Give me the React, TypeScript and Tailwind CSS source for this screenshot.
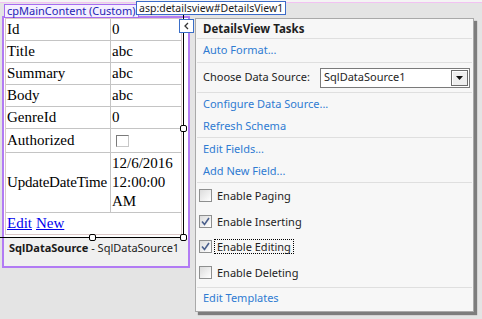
import React from "react";

const ui = { fontFamily: '"Noto Sans", "Open Sans", sans-serif' };
const serif = { fontFamily: '"Liberation Serif", "Times New Roman", serif' };

const rows = [
  { label: "Id", value: "0" },
  { label: "Title", value: "abc" },
  { label: "Summary", value: "abc" },
  { label: "Body", value: "abc" },
  { label: "GenreId", value: "0" },
];

function CheckBox({ checked }: { checked?: boolean }) {
  return (
    <div className="w-[13px] h-[13px] border border-[#8e8f8f] bg-gradient-to-br from-[#dcdcdc] to-[#ffffff] flex items-center justify-center">
      {checked && (
        <svg width="9" height="9" viewBox="0 0 9 9">
          <path d="M1 4.5 L3.5 7.5 L8 1" fill="none" stroke="#4a5f8c" strokeWidth="1.6" />
        </svg>
      )}
    </div>
  );
}

function Handle({ x, y }: { x: number; y: number }) {
  return (
    <div
      className="absolute w-[7px] h-[7px] bg-white border border-black rounded-[2px]"
      style={{ left: x - 3, top: y - 3 }}
    />
  );
}

function TaskLink({ children, h }: { children: React.ReactNode; h: string }) {
  return (
    <div className={`${h} flex items-center pl-[7px] text-[#2f7bd2]`}>{children}</div>
  );
}

function Sep() {
  return <div className="h-px mx-[1px] bg-[#dfdfdf]" />;
}

function CheckRow({ label, checked, focus, h }: { label: string; checked?: boolean; focus?: boolean; h: string }) {
  return (
    <div className={`${h} flex items-center pl-[3px] text-[#1e1e1e]`}>
      <CheckBox checked={checked} />
      <span
        className={`ml-[2px] px-[2px] leading-[13px] border ${
          focus ? "border-dotted border-black" : "border-transparent"
        }`}
      >
        {label}
      </span>
    </div>
  );
}

export default function App() {
  return (
    <div className="relative w-[482px] h-[319px] bg-[#e4e4e4] overflow-hidden" style={ui}>
      <div className="h-[3px] bg-[#f4f4f4] border-b border-[#f2c2f2]" />

      {/* content placeholder */}
      <div className="ml-[2px] mt-[13px] w-[188px] h-[252px] border-2 border-[#b27bf4] bg-white flex flex-col">
        <div className="ml-[1px] w-[177px] border border-[#dbc8c8]" style={serif}>
          {rows.map((r) => (
            <div key={r.label} className="flex border-b border-[#c4c4c4] text-[15px] leading-[19px] text-black">
              <div className="w-[105px] border-r border-[#c4c4c4] px-[1px] py-[1px]">{r.label}</div>
              <div className="flex-1 px-[1px] py-[1px]">{r.value}</div>
            </div>
          ))}
          <div className="flex border-b border-[#c4c4c4] text-[15px] leading-[19px] h-[24px]">
            <div className="w-[105px] border-r border-[#c4c4c4] px-[1px] flex items-center">Authorized</div>
            <div className="flex-1 flex items-center pl-[5px]">
              <div className="w-[13px] h-[12px] bg-white border border-[#7a7a7a] border-r-[#c8c8c8] border-b-[#c8c8c8]" />
            </div>
          </div>
          <div className="flex border-b border-[#c4c4c4] text-[15px] leading-[19px]">
            <div className="w-[105px] border-r border-[#c4c4c4] px-[1px] flex items-center tracking-[-0.2px]">UpdateDateTime</div>
            <div className="flex-1 px-[1px] py-[1px]">
              12/6/2016
              <br />
              12:00:00
              <br />
              AM
            </div>
          </div>
          <div className="flex text-[15px] leading-[19px] px-[1px] py-[1px] gap-[4px] text-[#0000ee]">
            <span className="underline">Edit</span>
            <span className="underline">New</span>
          </div>
        </div>
        <div className="h-[3px]" />
        <div className="flex-1 bg-[#f0f0f0] pl-[5px] pt-[2px] text-[11px] text-[#1a1a1a] leading-[16px] whitespace-nowrap">
          <span className="font-bold">SqlDataSource</span> - SqlDataSource1
        </div>
      </div>

      {/* selection frame */}
      <div className="absolute left-[183px] top-[15px] w-px h-[223px] bg-black" />
      <div className="absolute left-0 top-[237px] w-[184px] h-px bg-black" />
      <Handle x={183} y={128} />
      <Handle x={92} y={237} />
      <Handle x={183} y={237} />

      {/* tags */}
      <div className="absolute left-[4px] top-[4px] h-[14px] px-[2px] border border-[#a86cf0] bg-[#f4efff] text-[11px] leading-[12px] text-[#2424b4] whitespace-nowrap">
        cpMainContent (Custom)
      </div>
      <div className="absolute left-[136px] top-[1px] h-[14px] px-[2px] border border-[#3a6ac8] bg-white text-[10.5px] leading-[12px] text-[#1a1a1a] whitespace-nowrap">
        asp:detailsview#DetailsView1
      </div>
      <div className="absolute left-[179px] top-[19px] w-[15px] h-[14px] border border-[#3a6ec8] bg-white flex items-center justify-center">
        <svg width="7" height="8" viewBox="0 0 7 8">
          <path d="M5 1 L2 4 L5 7" fill="none" stroke="#333" strokeWidth="1.3" />
        </svg>
      </div>

      {/* smart tag panel */}
      <div className="absolute left-[195px] top-[18px] w-[279px] border border-[#a9a9a9] bg-[#f7f7f7] text-[11px] shadow-[3px_3px_1px_rgba(0,0,0,0.45)]">
        <div className="h-[19px] flex items-center pl-[7px] font-bold text-[11.5px] text-[#1e1e1e]">DetailsView Tasks</div>
        <Sep />
        <TaskLink h="h-[23px]">Auto Format...</TaskLink>
        <Sep />
        <div className="h-[29px] flex items-center pl-[7px] pr-[3px] text-[#1e1e1e]">
          <span>Choose Data Source:</span>
          <div className="ml-auto w-[150px] h-[20px] border border-[#7a7a7a] bg-white flex items-center">
            <span className="pl-[3px]">SqlDataSource1</span>
            <div className="ml-auto mr-[1px] w-[17px] h-[16px] border border-[#6b6b6b] bg-[#eeeeee] shadow-[inset_1px_1px_0_#ffffff] flex items-center justify-center">
              <svg width="7" height="4" viewBox="0 0 7 4">
                <path d="M0 0 H7 L3.5 4 Z" fill="#111" />
              </svg>
            </div>
          </div>
        </div>
        <Sep />
        <TaskLink h="h-[22px]">Configure Data Source...</TaskLink>
        <TaskLink h="h-[22px]">Refresh Schema</TaskLink>
        <Sep />
        <TaskLink h="h-[22px]">Edit Fields...</TaskLink>
        <TaskLink h="h-[22px]">Add New Field...</TaskLink>
        <Sep />
        <CheckRow h="h-[25px]" label="Enable Paging" />
        <CheckRow h="h-[26px]" label="Enable Inserting" checked />
        <CheckRow h="h-[25px]" label="Enable Editing" checked focus />
        <CheckRow h="h-[26px]" label="Enable Deleting" />
        <div className="h-[2px]" />
        <Sep />
        <TaskLink h="h-[21px]">Edit Templates</TaskLink>
        <div className="h-[2px]" />
      </div>
    </div>
  );
}
